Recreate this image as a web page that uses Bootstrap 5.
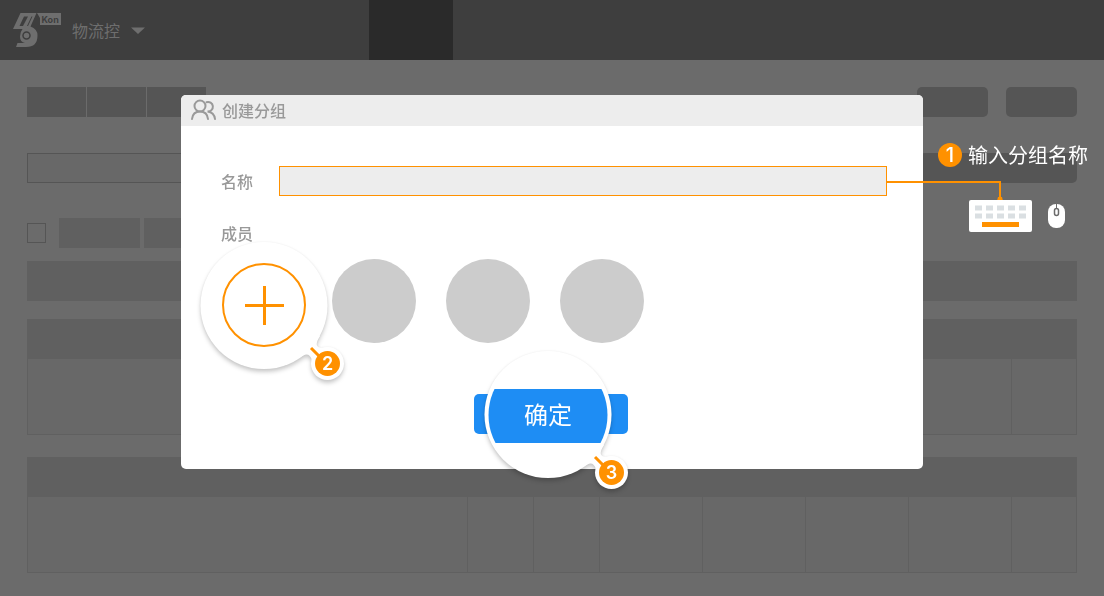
<!DOCTYPE html>
<html lang="zh-CN">
<head>
<meta charset="utf-8">
<meta name="viewport" content="width=device-width, initial-scale=1">
<title>创建分组</title>
<link href="https://cdn.jsdelivr.net/npm/bootstrap@5.3.0/dist/css/bootstrap.min.css" rel="stylesheet">
<style>
  :root { --accent: #ff9100; --action: #1e8df4; }
  body { background: #6b6b6b; font-family: "Noto Sans CJK SC", sans-serif; font-size: 16px; line-height: 24px; }

  /* dimmed page behind the dialog */
  .topbar { height: 60px; background: #3e3e3e; color: #6e6e6e; padding: 0 13px; }
  .topbar .brand-link { color: inherit; gap: 11px; width: 356px; }
  .topbar-tab { width: 84px; background: #2a2a2a; }
  .page-area { padding: 27px 27px 23px; }
  .blk { height: 30px; background: #555; }
  .blk-tab { width: 59px; }
  .blk-btn { width: 71px; border-radius: 5px; }
  .blk-wide { width: 157px; border-radius: 5px; }
  .blk-soft { width: 81px; height: 30px; background: #606060; }
  .search-box { height: 30px; background: #686868; border: 1px solid #555; border-radius: 0; }
  .tick { width: 19px; height: 20px; margin: 0 13px 0 0; background: transparent; border: 1px solid #555; border-radius: 0; appearance: none; }
  .band { height: 40px; background: #606060; }
  .sheet-row { height: 76px; background: #686868; border: 1px solid #606060; border-top: 0; }
  .sheet-cell { width: 103px; border-left: 1px solid #606060; }
  .sheet-cell.narrow { width: 66px; }
  .sheet-cell.last { width: 65px; }

  /* dialog */
  .group-dialog { max-width: 742px; margin: 95px auto; }
  .group-dialog .modal-content { border: 0; border-radius: 5px; color: #999; font-weight: 500; }
  .group-dialog .modal-header { height: 31px; padding: 0 10px; gap: 5px; justify-content: flex-start; align-items: flex-start; border: 0; border-radius: 5px 5px 0 0; background: #ededed; }
  .group-dialog .modal-header svg { margin-top: 4px; }
  .group-dialog .modal-body { padding: 40px 36px 0 40px; }
  .group-dialog .modal-footer { padding: 51px 38px 35px 36px; border: 0; }
  .group-title { font-size: 16px; line-height: 30px; font-weight: 500; }
  .name-label { width: 58px; }
  .name-input { height: 30px; border: 1px solid var(--accent); border-radius: 0; background: #ededed; }
  .name-input:focus { background: #ededed; border-color: var(--accent); box-shadow: none; }
  .members { gap: 30px; margin-top: 14px; }
  .add-slot { width: 81px; height: 84px; }
  .avatar { width: 84px; height: 84px; background: #ccc; }

  /* magnifier callouts */
  .lens { width: 128px; height: 126px; z-index: 2; }
  .lens > svg { position: absolute; inset: 0; overflow: visible; }
  .lens-shape { filter: drop-shadow(0 3px 2px rgba(0,0,0,.2)) drop-shadow(0 0 1px rgba(0,0,0,.06)); }
  .lens-num, .step-num { font-family: Inter, sans-serif; font-weight: 600; font-size: 18px; }
  .step-num { font-weight: 500; font-size: 20px; }
  .add-slot .lens { left: -21px; top: -17px; }
  .add-btn { width: 84px; height: 84px; border: 2px solid var(--accent); background: #fff; }
  .ok-btn { width: 154px; height: 40px; border: 0; border-radius: 5px; background: var(--action); }
  .ok-btn .lens { left: 10px; top: -43px; }
  .ok-text { font-size: 24px; line-height: 36px; color: #fff; font-weight: 400; }

  /* step one, hanging off the right end of the name field */
  .step-note { left: 100%; top: -23px; width: 202px; }
  .step-head { padding-left: 51px; gap: 6px; height: 24px; color: #fff; font-size: 20px; font-weight: 400; white-space: nowrap; }
  .step-num { width: 24px; height: 24px; background: var(--accent); }
</style>
</head>
<body>

<svg class="d-none" aria-hidden="true">
  <symbol id="lens-base" viewBox="0 0 150 145">
    <circle cx="64" cy="63.500" r="63.500" fill="#fff"/>
    <circle cx="127.500" cy="121.500" r="16.500" fill="#fff"/>
    <path d="M95 95L120 94Q112 106 123 106L112 118Q109 108 99 116Z" fill="#fff"/>
  </symbol>
</svg>

<nav class="topbar d-flex align-items-stretch">
  <a class="brand-link d-flex align-items-center text-decoration-none" href="#">
    <svg width="48" height="36" viewBox="0 0 48 36" aria-hidden="true">
      <path d="M7.500 1H23.500L17.500 14.500Q24.500 17 24.500 23.500Q24.500 35 13 35H3L4.500 31H12Q16 31 18 29Q15.500 31.500 12 31Q7 30 7 24.500Q7 20 9.500 17H0Z" fill="currentColor"/>
      <path d="M11 4.500H15L10 14H6.500Z" fill="#3e3e3e"/>
      <path d="M18.500 4.500H19.500L15 14H14Z" fill="#3e3e3e"/>
      <circle cx="13.500" cy="23.500" r="3.500" fill="none" stroke="#3e3e3e" stroke-width="1.500"/>
      <path d="M24 1H48V13H27V6Z" fill="currentColor"/>
      <text x="28.500" y="10.500" font-family="Inter, sans-serif" font-size="9" font-weight="700" fill="#3e3e3e">Kon</text>
    </svg>
    <span>物流控</span>
    <svg width="14" height="7" viewBox="0 0 14 7" aria-hidden="true"><path d="M0 0.500H14L7 7Z" fill="currentColor"/></svg>
  </a>
  <div class="topbar-tab"></div>
</nav>

<main class="page-area">
  <div class="d-flex">
    <div class="d-flex" style="gap:1px">
      <div class="blk blk-tab"></div><div class="blk blk-tab"></div><div class="blk blk-tab"></div>
    </div>
    <div class="d-flex ms-auto" style="gap:18px">
      <div class="blk blk-btn"></div><div class="blk blk-btn"></div>
    </div>
  </div>
  <div class="d-flex" style="margin-top:36px;gap:20px">
    <input class="search-box flex-grow-1" type="search" aria-label="搜索">
    <div class="blk blk-wide"></div>
  </div>
  <div class="d-flex align-items-center" style="margin-top:35px">
    <input class="tick" type="checkbox" aria-label="全选">
    <div class="blk-soft"></div>
    <div class="blk-soft ms-1"></div>
  </div>
  <div class="band" style="margin-top:13px"></div>
  <section style="margin-top:18px">
    <div class="band"></div>
    <div class="sheet-row d-flex">
      <div class="flex-grow-1"></div><div class="sheet-cell last"></div>
    </div>
  </section>
  <section style="margin-top:22px">
    <div class="band"></div>
    <div class="sheet-row d-flex">
      <div class="flex-grow-1"></div>
      <div class="sheet-cell narrow"></div><div class="sheet-cell narrow"></div>
      <div class="sheet-cell"></div><div class="sheet-cell"></div><div class="sheet-cell border-end-0"></div>
      <div class="sheet-cell"></div><div class="sheet-cell last"></div>
    </div>
  </section>
</main>

<div class="modal d-block" role="dialog" aria-labelledby="dlg-title">
  <div class="modal-dialog group-dialog">
    <form class="modal-content">
      <div class="modal-header">
        <svg width="26" height="22" viewBox="0 0 26 22" fill="none" stroke="#999" stroke-width="2" stroke-linecap="round" aria-hidden="true">
          <circle cx="9" cy="7" r="5.500"/>
          <path d="M1 20C1.500 15.500 4.500 12.500 9 12.500S16.500 15.500 17 20"/>
          <path d="M15.500 3.200A4.800 4.800 0 1 1 16.500 12.500C21 13 23.500 16 24 20"/>
        </svg>
        <h1 class="group-title mb-0" id="dlg-title">创建分组</h1>
      </div>
      <div class="modal-body">
        <div class="d-flex align-items-center">
          <label class="name-label flex-shrink-0" for="group-name">名称</label>
          <div class="position-relative flex-grow-1 d-flex">
            <input class="name-input form-control" id="group-name" type="text">
            <div class="step-note position-absolute">
              <div class="step-head d-flex align-items-center">
                <span class="step-num rounded-circle d-flex align-items-center justify-content-center">1</span>
                <span>输入分组名称</span>
              </div>
              <svg class="d-block" width="202" height="66" viewBox="0 0 202 66" aria-hidden="true">
                <path d="M0 15H113V31" fill="none" stroke="#ff9100" stroke-width="2"/>
                <path d="M111 30H115L116 34H110Z" fill="#ff9100"/>
                <rect x="82" y="33" width="63" height="32" rx="2" fill="#fff"/>
                <path d="M88 41H139M88 49H139" stroke="#dadfe2" stroke-width="5" stroke-dasharray="7 4"/>
                <rect x="95" y="55" width="37" height="5" fill="#ff9100"/>
                <rect x="161" y="37" width="17" height="24" rx="8" fill="#fff"/>
                <path d="M169.500 37V42" stroke="#6b6b6b"/>
                <rect x="167.500" y="41.500" width="4" height="7" rx="2" fill="#fff" stroke="#6b6b6b" stroke-width="1.500"/>
              </svg>
            </div>
          </div>
        </div>
        <div style="margin-top:25px">成员</div>
        <div class="members d-flex">
          <div class="add-slot position-relative">
            <div class="lens position-absolute d-flex align-items-center justify-content-center">
              <svg width="150" height="145" aria-hidden="true">
                <use class="lens-shape" href="#lens-base" width="150" height="145"/>
                <path d="M111 106L121 116" stroke="#ff9100" stroke-width="3"/>
                <circle cx="127.500" cy="121.500" r="12.500" fill="#ff9100"/>
                <text class="lens-num" x="127.500" y="128" text-anchor="middle" fill="#fff">2</text>
              </svg>
              <button class="add-btn rounded-circle position-relative p-0 d-flex align-items-center justify-content-center" type="button" aria-label="添加成员">
                <svg width="40" height="40" viewBox="0 0 40 40"><path d="M20.500 1V40M1 20.500H40" stroke="#ff9100" stroke-width="3"/></svg>
              </button>
            </div>
          </div>
          <div class="avatar rounded-circle"></div>
          <div class="avatar rounded-circle"></div>
          <div class="avatar rounded-circle"></div>
        </div>
      </div>
      <div class="modal-footer justify-content-center">
        <button class="ok-btn position-relative m-0 p-0" type="button">
          <span class="lens position-absolute d-flex align-items-center justify-content-center">
            <svg width="150" height="145" aria-hidden="true">
              <clipPath id="lens-clip"><circle cx="64" cy="64" r="59.500"/></clipPath>
              <use class="lens-shape" href="#lens-base" width="150" height="145"/>
              <rect x="0" y="38" width="128" height="54" fill="#1e8df4" clip-path="url(#lens-clip)"/>
              <path d="M111 106L121 116" stroke="#ff9100" stroke-width="3"/>
              <circle cx="127.500" cy="121.500" r="12.500" fill="#ff9100"/>
              <text class="lens-num" x="127.500" y="128" text-anchor="middle" fill="#fff">3</text>
            </svg>
            <span class="ok-text position-relative">确定</span>
          </span>
        </button>
      </div>
    </form>
  </div>
</div>

<script src="https://cdn.jsdelivr.net/npm/bootstrap@5.3.0/dist/js/bootstrap.bundle.min.js"></script>
</body>
</html>
